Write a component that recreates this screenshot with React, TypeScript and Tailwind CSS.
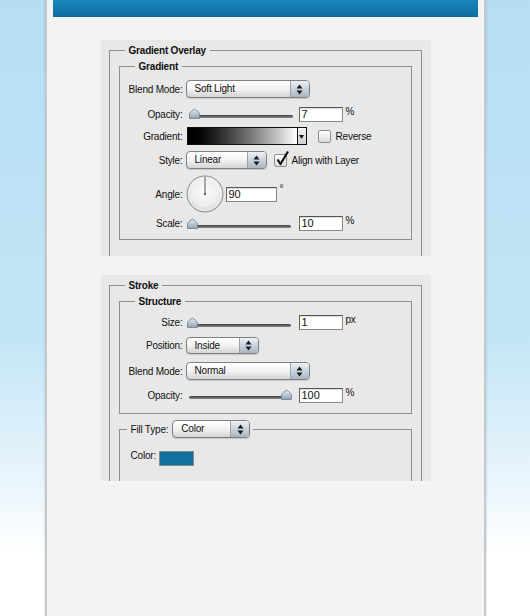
import type { ReactNode } from "react";

const txt = "text-[10px] tracking-[-0.2px] text-[#111]";

function Label({ children }: { children: ReactNode }) {
  return <span className={`w-[63px] shrink-0 text-right ${txt}`}>{children}</span>;
}

function PopUp({ value, className }: { value: string; className: string }) {
  return (
    <div
      className={`flex h-[18px] shrink-0 items-stretch overflow-hidden rounded-[4px] border border-[#7f7f7f] bg-gradient-to-b from-white via-[#f2f2f2] to-[#d4d4d4] shadow-[0_1px_1px_rgba(0,0,0,0.15)] ${className}`}
    >
      <span className={`flex-1 pl-[8px] leading-[16px] ${txt}`}>{value}</span>
      <span className="flex w-[19px] items-center justify-center border-l border-[#a0a0a0] bg-gradient-to-b from-[#eef2f6] via-[#c9d3dd] to-[#a9b6c3]">
        <svg width="7" height="11" viewBox="0 0 7 11">
          <path d="M3.5 0.5 L6.5 4.5 H0.5 Z M3.5 10.5 L6.5 6.5 H0.5 Z" fill="#1a1a1a" />
        </svg>
      </span>
    </div>
  );
}

function Slider({ thumb }: { thumb: "left" | "right" }) {
  return (
    <div className="relative h-[15px] w-[107px] shrink-0">
      <div className="absolute left-[3px] right-[2px] top-[8px] h-[3px] rounded-full bg-gradient-to-b from-[#3f3f3f] to-[#8d8d8d]" />
      <svg
        className={`absolute top-[1px] ${thumb === "left" ? "left-0" : "right-0"}`}
        width="13"
        height="11"
        viewBox="0 0 13 11"
      >
        <defs>
          <linearGradient id={`th-${thumb}`} x1="0" y1="0" x2="0" y2="1">
            <stop offset="0" stopColor="#e8eef4" />
            <stop offset="1" stopColor="#8ea1b2" />
          </linearGradient>
        </defs>
        <path
          d="M1.5 10.5 V6.5 Q1.5 4.8 3.2 3.5 L6.5 1 L9.8 3.5 Q11.5 4.8 11.5 6.5 V10.5 Z"
          fill={`url(#th-${thumb})`}
          stroke="#6c7a88"
          strokeWidth="0.8"
        />
      </svg>
    </div>
  );
}

function Field({ value, className = "" }: { value: string; className?: string }) {
  return (
    <div
      className={`h-[15px] w-[44px] shrink-0 border border-[#8a8a8a] border-t-[#555] border-l-[#666] bg-white pl-[2px] text-[11px] leading-[13px] text-[#111] shadow-[inset_0_1px_1px_rgba(0,0,0,0.15)] ${className}`}
    >
      {value}
    </div>
  );
}

function Unit({ children }: { children: ReactNode }) {
  return <span className={`ml-[3px] self-start ${txt} leading-[10px]`}>{children}</span>;
}

function Check({ checked }: { checked?: boolean }) {
  return (
    <span className="relative block h-[13px] w-[13px] shrink-0 rounded-[2px] border border-[#8e8e8e] bg-gradient-to-b from-white to-[#dcdcdc]">
      {checked && (
        <svg className="absolute -top-[4px] left-[1px] overflow-visible" width="13" height="15" viewBox="0 0 13 15">
          <path d="M1.5 8.5 L4.5 13 L12 0.5" fill="none" stroke="#111" strokeWidth="2.2" strokeLinejoin="round" />
        </svg>
      )}
    </span>
  );
}

function Legend({ children, className = "ml-[15px]" }: { children: ReactNode; className?: string }) {
  return (
    <legend className={`px-[4px] text-[10px] font-bold leading-[13px] tracking-[-0.2px] text-[#111] ${className}`}>
      {children}
    </legend>
  );
}

export default function App() {
  return (
    <div className="h-[616px] w-[530px] overflow-hidden bg-[linear-gradient(to_bottom,#b6def3_0%,#c3e5f6_55%,#e9f5fc_78%,#ffffff_90%)] font-['Liberation_Sans',Arial,sans-serif]">
      <div className="mx-auto h-full w-[441px] border-x-2 border-x-[#c4c9ce] bg-[#f3f3f3] shadow-[0_0_2px_rgba(80,100,120,0.35)]">
        <div className="mx-[6px] h-[17px] bg-gradient-to-b from-[#1a86bd] to-[#0e6b9d]" />

        {/* Gradient Overlay */}
        <div className="ml-[54px] mt-[23px] h-[216px] w-[330px] overflow-hidden bg-[#e8e8e8] pl-[8px] pt-[4px]">
          <fieldset className="h-[260px] w-[313px] border border-[#8f8f8f] pt-[3px]">
            <Legend>Gradient Overlay</Legend>
            <fieldset className="mx-[9px] border border-[#8f8f8f] pb-[8px] pt-[7px]">
              <Legend>Gradient</Legend>
              <div className="flex h-[18px] items-center">
                <Label>Blend Mode:</Label>
                <PopUp value="Soft Light" className="ml-[3px] w-[124px]" />
              </div>
              <div className="mt-[9px] flex h-[15px] items-center">
                <Label>Opacity:</Label>
                <div className="ml-[5px]">
                  <Slider thumb="left" />
                </div>
                <Field value="7" className="ml-[4px]" />
                <Unit>%</Unit>
              </div>
              <div className="mt-[5px] flex h-[18px] items-center">
                <Label>Gradient:</Label>
                <div className="ml-[4px] flex h-[18px] w-[120px] border border-[#111]">
                  <div className="flex-1 bg-gradient-to-r from-black to-white" />
                  <div className="flex w-[9px] items-end justify-center border-l border-[#111] bg-gradient-to-b from-[#f4f4f4] to-[#cfcfcf] pb-[5px]">
                    <svg width="5" height="4" viewBox="0 0 5 4">
                      <path d="M0 0 H5 L2.5 4 Z" fill="#111" />
                    </svg>
                  </div>
                </div>
                <span className="ml-[11px] flex">
                  <Check />
                </span>
                <span className={`ml-[5px] ${txt}`}>Reverse</span>
              </div>
              <div className="mt-[6px] flex h-[18px] items-center">
                <Label>Style:</Label>
                <PopUp value="Linear" className="ml-[3px] w-[81px]" />
                <span className="ml-[7px] flex">
                  <Check checked />
                </span>
                <span className={`ml-[5px] ${txt}`}>Align with Layer</span>
              </div>
              <div className="mt-[7px] flex h-[36px] items-center">
                <Label>Angle:</Label>
                <svg className="ml-[3px] shrink-0" width="38" height="38" viewBox="0 0 38 38">
                  <defs>
                    <radialGradient id="dial" cx="50%" cy="45%" r="55%">
                      <stop offset="0" stopColor="#fafafa" />
                      <stop offset="0.7" stopColor="#ededed" />
                      <stop offset="1" stopColor="#cfcfcf" />
                    </radialGradient>
                  </defs>
                  <circle cx="19" cy="19" r="18" fill="url(#dial)" stroke="#8f8f8f" />
                  <circle cx="19" cy="19" r="16.3" fill="none" stroke="#ffffff" strokeOpacity="0.7" />
                  <line x1="19" y1="19" x2="19" y2="2" stroke="#5a5a5a" strokeWidth="1" />
                  <rect x="18" y="18" width="2" height="2" fill="#5a5a5a" />
                </svg>
                <Field value="90" className="ml-[2px] w-[51px]" />
                <span className={`ml-[3px] self-start pt-[9px] ${txt} leading-[8px]`}>°</span>
              </div>
              <div className="mt-[4px] flex h-[15px] items-center">
                <Label>Scale:</Label>
                <div className="ml-[3px] mt-[2px]">
                  <Slider thumb="left" />
                </div>
                <Field value="10" className="ml-[6px]" />
                <Unit>%</Unit>
              </div>
            </fieldset>
          </fieldset>
        </div>

        {/* Stroke */}
        <div className="ml-[54px] mt-[19px] h-[206px] w-[330px] overflow-hidden bg-[#e8e8e8] pl-[8px] pt-[4px]">
          <fieldset className="h-[260px] w-[313px] border border-[#8f8f8f] pt-[3px]">
            <Legend>Stroke</Legend>
            <fieldset className="mx-[9px] border border-[#8f8f8f] pb-[10px] pt-[7px]">
              <Legend>Structure</Legend>
              <div className="flex h-[15px] items-center">
                <Label>Size:</Label>
                <div className="ml-[3px] mt-[2px]">
                  <Slider thumb="left" />
                </div>
                <Field value="1" className="ml-[6px]" />
                <Unit>px</Unit>
              </div>
              <div className="mt-[7px] flex h-[16px] items-center">
                <Label>Position:</Label>
                <PopUp value="Inside" className="ml-[3px] !h-[17px] w-[73px]" />
              </div>
              <div className="mt-[9px] flex h-[18px] items-center">
                <Label>Blend Mode:</Label>
                <PopUp value="Normal" className="ml-[3px] w-[124px]" />
              </div>
              <div className="mt-[8px] flex h-[15px] items-center">
                <Label>Opacity:</Label>
                <div className="ml-[3px]">
                  <Slider thumb="right" />
                </div>
                <Field value="100" className="ml-[6px]" />
                <Unit>%</Unit>
              </div>
            </fieldset>
            <fieldset className="mx-[9px] mt-[6px] h-[120px] border border-[#8f8f8f] pt-[13px]">
              <legend className="ml-[7px] flex items-center pl-[4px] pr-[3px]">
                <span className={txt}>Fill Type:</span>
                <PopUp value="Color" className="ml-[4px] w-[78px]" />
              </legend>
              <div className="flex items-start pl-[11px]">
                <span className={`${txt} leading-[9px]`}>Color:</span>
                <span className="ml-[3px] h-[15px] w-[35px] border border-[#8a8a8a] bg-[#12719f]" />
              </div>
            </fieldset>
          </fieldset>
        </div>
      </div>
    </div>
  );
}
